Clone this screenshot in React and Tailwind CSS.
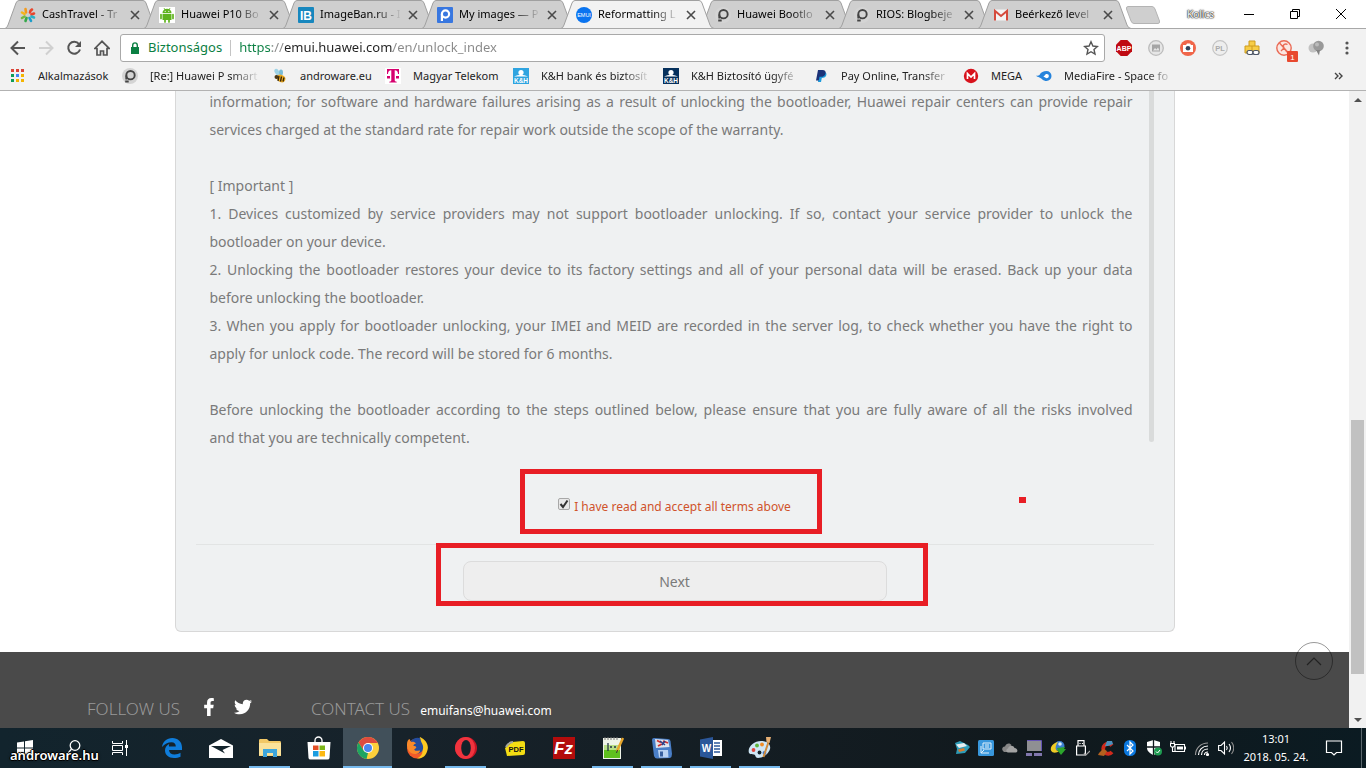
import { useState } from 'react';
import { FaFacebookF, FaTwitter } from 'react-icons/fa';

/* ---------- small favicons ---------- */

const TravelIcon = () => (
  <svg viewBox="0 0 16 16" className="w-4 h-4 shrink-0" fill="none" strokeWidth="2.6" strokeLinecap="round">
    <path d="M6 5.5 5.5 2" stroke="#f39a1d" />
    <path d="M10 5.5C10 4 11 3 12 2.5" stroke="#e8452c" />
    <path d="M4.5 7 2 5.5" stroke="#f5b51b" />
    <path d="M11.5 7.5 14 6.5" stroke="#e8452c" />
    <path d="M4.5 9.5 2 11" stroke="#77b843" />
    <path d="M6.5 11 5.5 14" stroke="#36a84a" />
    <path d="M9.5 11 11 13.8" stroke="#1c9dc9" />
    <path d="M11.5 9.5 14 10.5" stroke="#27b2c8" />
  </svg>
);

const AndroidIcon = () => (
  <svg viewBox="0 0 16 16" className="w-4 h-4 shrink-0">
    <rect width="16" height="16" fill="#fff" />
    <path d="M3.5 6a4.5 4.2 0 0 1 9 0z" fill="#5fb31e" />
    <path d="M3.5 6.8h9V13h-9z" fill="#5fb31e" />
    <path d="M2 7.5v4M14 7.5v4M6 12.500v2.500M10 12.500v2.500" stroke="#5fb31e" strokeWidth="1.700" strokeLinecap="round" />
    <path d="m5 1 1 2M11 1l-1 2" stroke="#5fb31e" strokeWidth="0.8" />
    <circle cx="6.200" cy="4.300" r="0.600" fill="#fff" />
    <circle cx="9.800" cy="4.300" r="0.600" fill="#fff" />
  </svg>
);

const ImageBanIcon = () => (
  <svg viewBox="0 0 16 16" className="w-4 h-4 shrink-0">
    <rect width="16" height="16" rx="1" fill="#1787be" />
    <text x="8" y="12.500" textAnchor="middle" fontSize="12" fontWeight="700" fill="#fff" fontFamily="Liberation Sans, sans-serif">IB</text>
  </svg>
);

const PostImageIcon = () => (
  <svg viewBox="0 0 16 16" className="w-4 h-4 shrink-0">
    <rect width="16" height="16" rx="1" fill="#3877e0" />
    <circle cx="8.500" cy="7" r="3.600" fill="none" stroke="#fff" strokeWidth="2.200" />
    <path d="M4.900 7v7" stroke="#fff" strokeWidth="2.200" />
  </svg>
);

const EmuiIcon = () => (
  <svg viewBox="0 0 16 16" className="w-4 h-4 shrink-0">
    <circle cx="8" cy="8" r="8" fill="#0a74f0" />
    <text x="8" y="10" textAnchor="middle" fontSize="5.500" fill="#fff" fontFamily="Liberation Sans, sans-serif">EMUI</text>
  </svg>
);

const ForumIcon = () => (
  <svg viewBox="0 0 16 16" className="w-4 h-4 shrink-0">
    <circle cx="8" cy="8" r="8" fill="#d4d4d4" />
    <circle cx="8.500" cy="7.200" r="4.200" fill="none" stroke="#444" strokeWidth="1.900" />
    <path d="M4.300 7.500v4M3.200 13.500h3.500" stroke="#444" strokeWidth="1.900" />
  </svg>
);

const GmailIcon = () => (
  <svg viewBox="0 0 16 16" className="w-4 h-4 shrink-0">
    <rect x="1" y="2.500" width="14" height="11" rx="1" fill="#f4f4f4" />
    <path d="M2 13.500V4l6 5 6-5v9.500" fill="none" stroke="#d54b3d" strokeWidth="2" />
  </svg>
);

const AppsIcon = () => (
  <svg viewBox="0 0 16 16" className="w-4 h-4 shrink-0">
    <path d="M1 1h3v3H1zM6 1h3v3H6zM11 1h3v3h-3z" fill="#db4437" />
    <path d="M1 6h3v3H1zM1 11h3v3H1z" fill="#0f9d58" />
    <path d="M6 6h3v3H6z" fill="#4285f4" />
    <path d="M11 6h3v3h-3zM6 11h3v3H6zM11 11h3v3h-3z" fill="#f4b400" />
  </svg>
);

const BeeIcon = () => (
  <svg viewBox="0 0 16 16" className="w-4 h-4 shrink-0">
    <ellipse cx="5" cy="4" rx="2.200" ry="3.500" transform="rotate(-30 5 4)" fill="#9ed3e6" />
    <ellipse cx="9" cy="4.500" rx="2" ry="3" fill="#79bcd8" />
    <ellipse cx="9" cy="10.500" rx="4.500" ry="3.500" transform="rotate(25 9 10.500)" fill="#edaa1e" />
    <path d="m7 8 -1 5M9.500 8.500l-1 5M12 9.500l-1 4" stroke="#33250f" strokeWidth="1.300" />
    <circle cx="4.500" cy="9" r="2" fill="#4a3716" />
  </svg>
);

const TelekomIcon = () => (
  <svg viewBox="0 0 16 16" className="w-4 h-4 shrink-0">
    <rect width="16" height="16" fill="#fff" />
    <path d="M2 1h12v5h-1c0-2.500-1-3.800-3.300-3.800V12c0 1.200.6 1.700 2 1.700v.8H4.300v-.8c1.400 0 2-.5 2-1.700V2.200C4 2.200 3 3.500 3 6H2z" fill="#d6006e" />
    <path d="M2 8h3v2.500H2zM11 8h3v2.500h-3z" fill="#d6006e" />
  </svg>
);

const BankIcon = ({ color }) => (
  <svg viewBox="0 0 16 16" className="w-4 h-4 shrink-0">
    <rect width="16" height="16" fill={color} />
    <circle cx="8" cy="4.500" r="2.600" fill="#fff" />
    <path d="M1 8.500Q8 5 15 8.500z" fill="#fff" />
    <text x="8" y="14.500" textAnchor="middle" fontSize="6.500" fontWeight="700" fill="#fff" fontFamily="Liberation Sans, sans-serif">K&amp;H</text>
  </svg>
);

const PaypalIcon = () => (
  <svg viewBox="0 0 16 16" className="w-4 h-4 shrink-0">
    <path d="M6 4h6c2 1 1.600 3 .8 4.300-.8 1.300-2 1.700-4 1.700L8 14H5z" fill="#1d9bdc" />
    <path d="M5 2h4.500c2.500 0 3.500 1.300 3 3.500C12 8 10.300 8.800 8 8.800H6.500L5.800 12.500H3z" fill="#1c3278" />
  </svg>
);

const MegaIcon = () => (
  <svg viewBox="0 0 16 16" className="w-4 h-4 shrink-0">
    <circle cx="8" cy="8" r="7.200" fill="#d8121c" />
    <path d="M4.500 11V5.500L8 9l3.500-3.500V11" fill="none" stroke="#fff" strokeWidth="1.700" />
  </svg>
);

const MediaFireIcon = () => (
  <svg viewBox="0 0 16 16" className="w-4 h-4 shrink-0">
    <path d="M0 7.500c1.500.6 2.500.3 3.500-.5C5 4 7.500 3 10.500 3A5 5 0 0 1 10.500 13C7 13 6 10.500 3.500 9.500 2 9 .8 8.500 0 7.500z" fill="#2583dc" />
    <path d="M7 8.500c2 0 1.500-2.500 3.800-2.500a2 2 0 0 1 0 4.200C9.500 10.200 9 8.800 7 8.500z" fill="#fff" />
  </svg>
);

/* ---------- extension icons ---------- */

const AbpIcon = () => (
  <svg viewBox="0 0 16 16" className="w-4 h-4">
    <path d="M4.700 0h6.600L16 4.700v6.600L11.300 16H4.700L0 11.300V4.700z" fill="#bf0a12" />
    <text x="8" y="10.800" textAnchor="middle" fontSize="7" fontWeight="700" fill="#fff" fontFamily="Liberation Sans, sans-serif">ABP</text>
  </svg>
);

const PictureIcon = () => (
  <svg viewBox="0 0 16 16" className="w-4 h-4">
    <circle cx="8" cy="8" r="7.300" fill="#e6e6e6" stroke="#bcbcbc" strokeWidth="1.300" />
    <rect x="4" y="4.500" width="8" height="7" fill="#a5a5a5" />
    <path d="m5 10.500 2-2.500 1.500 1.500L10 7.500l1.500 3z" fill="#e6e6e6" />
  </svg>
);

const CameraIcon = () => (
  <svg viewBox="0 0 16 16" className="w-4 h-4">
    <circle cx="8" cy="8" r="8" fill="#f0664a" />
    <path d="M3 5h3l1-1.500h3L11 5h2v7H3z" fill="#fff" />
    <circle cx="8" cy="8.300" r="2.300" fill="#34455e" />
  </svg>
);

const PlIcon = () => (
  <svg viewBox="0 0 16 16" className="w-4 h-4">
    <circle cx="8" cy="8" r="7.300" fill="#eee" stroke="#c4c4c4" strokeWidth="1.200" />
    <text x="8" y="10.800" textAnchor="middle" fontSize="7.500" fontWeight="700" fill="#ababab" fontFamily="Liberation Sans, sans-serif">PL</text>
  </svg>
);

const BlocksIcon = () => (
  <svg viewBox="0 0 16 16" className="w-4 h-4">
    <path d="M5 1h6v5h4v7H1V6h4z" fill="#f7cd45" stroke="#cf9c1d" />
    <path d="M5 6h6M8 6v6" stroke="#cf9c1d" />
    <rect x="3" y="10.500" width="6" height="4" rx="2" fill="#fff" stroke="#4c5566" strokeWidth="1.200" />
    <rect x="9" y="10.500" width="6" height="4" rx="2" fill="#fff" stroke="#4c5566" strokeWidth="1.200" />
  </svg>
);

const BlockedIcon = () => (
  <svg viewBox="0 0 22 22" className="w-[22px] h-[22px] ml-1.5 mt-1.5 shrink-0">
    <circle cx="8" cy="8" r="7.200" fill="#fbe6e1" stroke="#ea6a55" strokeWidth="1.400" />
    <path d="m3.500 3 9 10M5 11l3-3c-2-3 1-5 3.500-3.500M8 8l3 4" fill="none" stroke="#ea6a55" strokeWidth="1.400" />
    <rect x="11" y="11" width="11" height="11" rx="1" fill="#e8492f" />
    <text x="16.500" y="19.500" textAnchor="middle" fontSize="8" fill="#fff" fontFamily="Liberation Sans, sans-serif">1</text>
  </svg>
);

const GlobeIcon = () => (
  <svg viewBox="0 0 16 16" className="w-4 h-4">
    <circle cx="5" cy="8" r="4.500" fill="#c2c2c2" />
    <circle cx="10.500" cy="6" r="5.300" fill="#999" />
    <path d="M8 10h4l-1 5.500z" fill="#828282" />
    <circle cx="9" cy="4.500" r="2" fill="#bbb" />
  </svg>
);

/* ---------- taskbar icons ---------- */

const StartIcon = () => (
  <svg viewBox="0 0 16 16" className="w-4 h-4" fill="#fff">
    <path d="M0 2.500 7 1.500v6H0zM8 1.300 16 0v7.500H8zM0 8.500h7v6L0 13.500zM8 8.500h8V16l-8-1.200z" />
  </svg>
);

const SearchIcon = () => (
  <svg viewBox="0 0 16 16" className="w-4 h-4" fill="none" stroke="#fff" strokeWidth="1.300">
    <circle cx="9" cy="5.500" r="4.800" />
    <path d="M5.500 9 .5 15" />
  </svg>
);

const TaskViewIcon = () => (
  <svg viewBox="0 0 18 18" className="w-[18px] h-[18px] mr-1.5" fill="none" stroke="#fff">
    <path d="M1.500 2v2.500h10V2M1.500 16v-2.500h10V16M1.500 6.500h10v5h-10zM15.500 1v16" />
    <path d="M14 6h3v3h-3z" fill="#fff" stroke="none" />
  </svg>
);

const EdgeIcon = () => (
  <svg viewBox="0 0 20 20" className="w-5 h-5">
    <path d="M0 9C.8 3.500 4.800 0 10.300 0 16 0 20 4 20 9.300V12H7c.2 3 2.500 4.500 5.500 4.500 2.200 0 4.300-.6 6-1.700v4C16.800 19.700 14.500 20 12 20 6.500 20 3 17 3 12.300 3 9.500 4.700 7 7.500 5.800 6.500 6.900 7 8.300 7 8.500h6.800C13.800 6 12.500 4.300 9.500 4.300 6 4.300 2.500 6 0 9z" fill="#0f7ddb" />
  </svg>
);

const MailIcon = () => (
  <svg viewBox="0 0 24 20" className="w-6 h-5">
    <path d="M0 7.500 12 1l12 6.500V20H0z" fill="#fff" />
    <path d="M2 8h20L13.500 12l2.500 3.500z" fill="#14242c" />
  </svg>
);

const FolderIcon = () => (
  <svg viewBox="0 0 22 20" className="w-[22px] h-5">
    <path d="M0 2.500C0 1.500.5 1 1.500 1H8l2 2h10.500c1 0 1.500.5 1.500 1.500V18H0z" fill="#f2c866" />
    <path d="M0 5h22v12.500H0z" fill="#fbe29a" />
    <path d="M4 19v-8h14v8h-4v-4H8v4z" fill="#3ea6dc" />
  </svg>
);

const StoreIcon = () => (
  <svg viewBox="0 0 24 24" className="w-6 h-6">
    <path d="M8 7V4.500a3.500 3.500 0 0 1 7 0V7" fill="none" stroke="#fff" strokeWidth="1.300" />
    <path d="M.5 6h23L22.500 22q-.2 1.500-2 1.500h-17q-1.800 0-2-1.500z" fill="#fff" />
    <path d="M6 9.500h5.500V14H6z" fill="#e34f26" />
    <path d="M12.500 9.500H18V14h-5.500z" fill="#7cb518" />
    <path d="M6 15h5.500v5.500H6z" fill="#1c9de0" />
    <path d="M12.500 15H18v5.500h-5.500z" fill="#fcb813" />
  </svg>
);

const ChromeIcon = () => (
  <svg viewBox="0 0 22 22" className="w-[22px] h-[22px]">
    <circle cx="11" cy="11" r="11" fill="#fdd03b" />
    <path d="M1.500 5.500A11 11 0 0 1 20.500 5.500L20.600 6H11l-4.500 7.500z" fill="#dd4b3e" />
    <path d="M1.500 5.500 6.600 13.500 11 16l-1.500 6A11 11 0 0 1 1.500 5.500z" fill="#1da462" />
    <circle cx="11" cy="11" r="5" fill="#fff" />
    <circle cx="11" cy="11" r="4" fill="#4a86ee" />
  </svg>
);

const FirefoxIcon = () => (
  <svg viewBox="0 0 22 22" className="w-[22px] h-[22px]">
    <circle cx="11" cy="11.500" r="10" fill="#f15a29" />
    <path d="M14 0c6 3 9 8 7.500 13C20 19 16.500 21.800 11 21.500c6-3 7-8 3.500-12C13 6.500 13 3 14 0z" fill="#fdc921" />
    <path d="M5 4c3-3.500 7-4 9.500-2.500 0 4 3.500 6 2.500 10.500-1 5-8 6-11 2-2-3-2.500-7-1-10z" fill="#234c9e" />
    <path d="M1 7c0-3 1.500-4.500 2.500-5L5 5c2-.5 4 0 5 1.500-2 .5-2.500 1.500-2.500 2.500 3 0 3.500 1.500 2 2.500-1.500.5-1.500 1-.5 2 2 1 3.500-.5 5 0 0 2-2.500 3.500-5 3.500C4 17 .5 12 1 7z" fill="#f9892a" />
  </svg>
);

const OperaIcon = () => (
  <svg viewBox="0 0 22 22" className="w-[22px] h-[22px]">
    <circle cx="11" cy="11" r="11" fill="#c51424" />
    <path d="M11 0A11 11 0 0 0 11 22 9 11 0 0 0 11 0z" fill="#f0343e" />
    <ellipse cx="11" cy="11" rx="4.800" ry="8" fill="#14222a" />
  </svg>
);

const PdfIcon = () => (
  <svg viewBox="0 0 20 18" className="w-5 h-[18px]">
    <path d="M0 9 7 3 18 2q2 0 2 2v10q0 2-2 2L2 17z" fill="#f4dd13" />
    <path d="M1 8Q3 3.500 8 3" fill="none" stroke="#a4a59e" strokeWidth="2" />
    <text x="11" y="13" textAnchor="middle" fontSize="7.500" fontWeight="700" fill="#111" fontFamily="Liberation Sans, sans-serif">PDF</text>
  </svg>
);

const FileZillaIcon = () => (
  <svg viewBox="0 0 22 22" className="w-[22px] h-[22px]">
    <rect width="22" height="22" fill="#b30c0c" />
    <text x="10.500" y="17" textAnchor="middle" fontSize="17" fontWeight="700" fontStyle="italic" fill="#fff" fontFamily="Liberation Sans, sans-serif">Fz</text>
  </svg>
);

const NotepadIcon = () => (
  <svg viewBox="0 0 22 24" className="w-[22px] h-6">
    <path d="M1 2h18v21H1z" fill="#eef3e8" />
    <path d="M2 13h16v9H2z" fill="#5fc01e" />
    <path d="M2 9h16v5H2z" fill="#b7df86" />
    <path d="M3 1v3M6 1v3M9 1v3M12 1v3M15 1v3" stroke="#777" />
    <path d="M6 7v8M8 11h2M12 11h2" stroke="#234" strokeWidth="1.300" />
    <path d="m21 2-6 13" stroke="#e6a52c" strokeWidth="2.500" />
    <path d="m15.500 14-1 3" stroke="#333" />
  </svg>
);

const DiskIcon = () => (
  <svg viewBox="0 0 22 22" className="w-[22px] h-[22px]">
    <path d="M1 3Q1 1 3 1l14 1q2 0 2.500 2L21 17q0 3-2 4l-13 .5Q4 21.500 3 19z" fill="#4a7fc8" />
    <path d="m4 2 13 1 1.500 7L5 11z" fill="#dfe5ee" />
    <path d="m6 3.500 4 2M12 4l5 2M7 9l4-2" stroke="#cf3131" strokeWidth="1.800" />
    <path d="m9 4 5 4M14 4l-3 4" stroke="#283e88" strokeWidth="1.400" />
    <path d="M7 13h10l.5 7.500H8z" fill="#b9d2f2" />
    <path d="M9 14.500h3v5H9z" fill="#375f9e" />
  </svg>
);

const WordIcon = () => (
  <svg viewBox="0 0 22 22" className="w-[22px] h-[22px]">
    <path d="M12 3h10v16H12z" fill="#fff" />
    <path d="M14 6h6M14 9h6M14 12h6M14 15h6" stroke="#2b579a" strokeWidth="1.300" />
    <path d="M0 2.500 13 0v22L0 19.500z" fill="#2b579a" />
    <text x="6.500" y="15" textAnchor="middle" fontSize="10" fontWeight="700" fill="#fff" fontFamily="Liberation Sans, sans-serif">W</text>
  </svg>
);

const PaintIcon = () => (
  <svg viewBox="0 0 24 24" className="w-6 h-6">
    <path d="M1 17C-1 11 6 5 13 5s10 4 9 8-6 9-12 9c-3 0-2-3-4-3.500S1.800 18.500 1 17z" fill="#cfe6f5" />
    <circle cx="5.500" cy="14" r="1.900" fill="#e0463c" />
    <circle cx="9" cy="9.500" r="1.900" fill="#5db53c" />
    <circle cx="14" cy="8.500" r="1.900" fill="#f08b25" />
    <circle cx="16.500" cy="17" r="1.900" fill="#3a78cf" />
    <circle cx="11.500" cy="16.500" r="1.900" fill="#14222a" />
    <path d="m20.500 6-5 15" stroke="#d18b3c" strokeWidth="2" />
    <path d="m18 1 5 0-1.500 6-3-1z" fill="#e7b074" />
  </svg>
);

/* ---------- tray icons ---------- */

const ShieldFishIcon = () => (
  <svg viewBox="0 0 16 16" className="w-4 h-4">
    <path d="M1 3 6 1l8 4 2 2-5 6-9 1 1-5z" fill="#2d9cb8" />
    <path d="m2 4.500 8-1.500 3 3-8 2z" fill="#e6eef0" />
    <path d="m4 9.500 6-1.500 1 2.500-6 1.500z" fill="#d4792e" />
  </svg>
);

const MonitorBlueIcon = () => (
  <svg viewBox="0 0 16 16" className="w-4 h-4">
    <rect width="16" height="16" rx="1.500" fill="#3897dc" />
    <path d="M5 3h8v6H5zM3 6v7h8M7 5h4M7 7h4M3 13l3-3" fill="none" stroke="#e1f1fc" />
  </svg>
);

const CloudIcon = () => (
  <svg viewBox="0 0 16 16" className="w-4 h-4">
    <path d="M1 11c-2-2 0-5 2-4.500C4 3 8 2.500 9.500 5L5 12H2z" fill="#868686" />
    <path d="M6 12.500c-2.500-.5-2-3.500 0-4C7 5 11.500 5 12.500 8c3 0 4 4 1.500 4.500z" fill="#a3a3a3" />
  </svg>
);

const ComputerIcon = () => (
  <svg viewBox="0 0 16 16" className="w-4 h-4">
    <path d="M1 0h14v11H1z" fill="#8f8f93" />
    <path d="M1 .5h14.500V11" fill="none" stroke="#6554b5" />
    <path d="M0 13h6v3H0zM8 13h8v3H8z" fill="#8177ad" />
  </svg>
);

const IdmIcon = () => (
  <svg viewBox="0 0 16 16" className="w-4 h-4">
    <circle cx="9.500" cy="6" r="5" fill="#3b7fd0" />
    <path d="M8 2C3 3 0 7 1 10.500c1.500 3 6 2.500 8 .5-4 0-4.500-4.500-1-9z" fill="#eecb25" />
    <path d="m7 8 8-1-1 2h2l-5 6-3-4z" fill="#2ca52c" />
    <circle cx="10" cy="4" r="1.800" fill="#d9edfb" />
  </svg>
);

const UsbIcon = () => (
  <svg viewBox="0 0 16 16" className="w-4 h-4" fill="none" stroke="#fff" strokeWidth="1.200">
    <path d="M4 .6h6V6H4zM2.600 6h8.800v9H2.600z" />
    <path d="M6 3v1M8.500 3v1" />
    <path d="m10 13 2 2 4-4" stroke="#a6a6a6" />
  </svg>
);

const CleanerIcon = () => (
  <svg viewBox="0 0 16 16" className="w-4 h-4">
    <path d="M14 5.500A5 5 0 1 0 14 12" fill="none" stroke="#cf2a1c" strokeWidth="3.800" />
    <path d="m9 1 5 0 1 3-5 2-3 0z" fill="#4b90bd" />
    <path d="m5 9 4 2-3 5-6-1 1-2z" fill="#b3621f" />
  </svg>
);

const BluetoothIcon = () => (
  <svg viewBox="0 0 16 16" className="w-4 h-4">
    <rect x="2" width="12" height="16" rx="5.500" fill="#0a78e0" />
    <path d="m5 5 6 6-3 3V2l3 3-6 6" fill="none" stroke="#fff" strokeWidth="1.200" />
  </svg>
);

const DefenderIcon = () => (
  <svg viewBox="0 0 16 16" className="w-4 h-4">
    <path d="M7.500 0 14 2v6c0 3-3 5.500-6.500 7C4 13.500 1 11 1 8V2z" fill="#fff" />
    <path d="M7.500 0v15M1 7h13" stroke="#111a1e" strokeWidth="1.300" />
    <circle cx="12" cy="11.500" r="4" fill="#1e9b51" />
    <path d="m10 11.500 1.500 1.500 2.500-3" fill="none" stroke="#fff" />
  </svg>
);

const BatteryIcon = () => (
  <svg viewBox="0 0 16 16" className="w-4 h-4" fill="none" stroke="#fff" strokeWidth="1.100">
    <path d="M5 4.500h9.500v7H5zM15.500 6.500v3" />
    <path d="M7 6.500h6v3H7z" fill="#fff" stroke="none" />
    <path d="M1 1v2M4 1v2M.5 3.500h4V6l-1 1h-2l-1-1zM2.500 7v4.500H5" />
  </svg>
);

const WifiIcon = () => (
  <svg viewBox="0 0 16 16" className="w-4 h-4" fill="none" stroke="#fff" strokeWidth="1.200">
    <path d="M1.500 15C1.500 8 7 3 14 3" stroke="#9a9a9a" />
    <path d="M4.500 15C4.500 10 8.500 6 14 6M7.500 15c0-3.500 2.500-6 6.500-6M10.500 15c0-2 1.500-3 3.500-3" />
    <circle cx="13.500" cy="14.500" r="1" fill="#fff" />
  </svg>
);

const SpeakerIcon = () => (
  <svg viewBox="0 0 16 16" className="w-4 h-4" fill="none" stroke="#fff" strokeWidth="1.100">
    <path d="M.6 5.500H3L6.500 2v12L3 10.500H.6z" />
    <path d="M8.500 6q1.500 2 0 4M11 4q3 4 0 8" />
    <path d="M13.500 2q4.500 6 0 12" stroke="#8c8c8c" />
  </svg>
);

/* ---------- data ---------- */

const TABS = [
  { title: 'CashTravel - Tr', Icon: TravelIcon },
  { title: 'Huawei P10 Bo', Icon: AndroidIcon },
  { title: 'ImageBan.ru - I', Icon: ImageBanIcon },
  { title: 'My images — P', Icon: PostImageIcon },
  { title: 'Reformatting L', Icon: EmuiIcon, active: true },
  { title: 'Huawei Bootlo', Icon: ForumIcon },
  { title: 'RIOS: Blogbeje', Icon: ForumIcon },
  { title: 'Beérkező level', Icon: GmailIcon },
];

const BankLight = () => <BankIcon color="#2fa4e0" />;
const BankDark = () => <BankIcon color="#06305c" />;

const BOOKMARKS = [
  { title: 'Alkalmazások', Icon: AppsIcon, width: 'w-[112px]' },
  { title: '[Re:] Huawei P smart', Icon: ForumIcon, width: 'w-[150px]', fade: true },
  { title: 'androware.eu', Icon: BeeIcon, width: 'w-[113px]' },
  { title: 'Magyar Telekom', Icon: TelekomIcon, width: 'w-[128px]' },
  { title: 'K&H bank és biztosít', Icon: BankLight, width: 'w-[150px]', fade: true },
  { title: 'K&H Biztosító ügyfé', Icon: BankDark, width: 'w-[150px]', fade: true },
  { title: 'Pay Online, Transfer', Icon: PaypalIcon, width: 'w-[150px]', fade: true },
  { title: 'MEGA', Icon: MegaIcon, width: 'w-[73px]' },
  { title: 'MediaFire - Space fo', Icon: MediaFireIcon, width: 'w-[150px]', fade: true },
];

const EXTENSIONS = [
  { name: 'Adblock Plus', Icon: AbpIcon },
  { name: 'Image viewer', Icon: PictureIcon },
  { name: 'Screenshot', Icon: CameraIcon },
  { name: 'PL', Icon: PlIcon },
  { name: 'Blocks', Icon: BlocksIcon },
  { name: 'Blocker', Icon: BlockedIcon },
  { name: 'Globe', Icon: GlobeIcon },
];

const TASKS = [
  { name: 'Start', Icon: StartIcon },
  { name: 'Search', Icon: SearchIcon },
  { name: 'Task View', Icon: TaskViewIcon },
  { name: 'Edge', Icon: EdgeIcon },
  { name: 'Mail', Icon: MailIcon },
  { name: 'Explorer', Icon: FolderIcon, open: true },
  { name: 'Store', Icon: StoreIcon },
  { name: 'Chrome', Icon: ChromeIcon, open: true, active: true },
  { name: 'Firefox', Icon: FirefoxIcon },
  { name: 'Opera', Icon: OperaIcon, open: true },
  { name: 'PDF', Icon: PdfIcon },
  { name: 'FileZilla', Icon: FileZillaIcon },
  { name: 'Notepad++', Icon: NotepadIcon, open: true },
  { name: 'Commander', Icon: DiskIcon, open: true },
  { name: 'Word', Icon: WordIcon, open: true },
  { name: 'Paint', Icon: PaintIcon, open: true },
];

const TRAY = [
  ShieldFishIcon, MonitorBlueIcon, CloudIcon, ComputerIcon, IdmIcon, UsbIcon,
  CleanerIcon, BluetoothIcon, DefenderIcon, BatteryIcon, WifiIcon, SpeakerIcon,
];

const FADE = '[mask-image:linear-gradient(to_right,#000_calc(100%-28px),transparent)]';

/* ---------- browser ---------- */

function Tab({ title, Icon, active }) {
  return (
    <div className={`relative w-[153px] h-[29px] -mr-3.5 shrink-0 flex items-center pl-[15px] ${active ? 'z-10' : ''}`}>
      <svg viewBox="0 0 153 29" preserveAspectRatio="none" className="absolute inset-0 w-full h-full">
        <path d="M0 28.500 Q2 28 3 25L11 3Q12 .5 14 .5H138Q140 .5 141 3L149 25Q150 28 153 28.500" fill={active ? '#f2f2f2' : '#cfcfcf'} stroke="#a0a0a0" />
        {active && <path d="M1 28.500H152" stroke="#f2f2f2" />}
      </svg>
      <button className="relative flex items-center gap-1.5 text-left">
        <Icon />
        <span className={`w-[82px] overflow-hidden whitespace-nowrap ${FADE}`}>{title}</span>
      </button>
      <button aria-label="Close tab" className="relative ml-1.5">
        <svg viewBox="0 0 10 10" className="w-2.5 h-2.5" stroke="#4a4a4a" strokeWidth="1.600"><path d="m1 1 8 8M9 1 1 9" /></svg>
      </button>
    </div>
  );
}

function TitleBar() {
  return (
    <div className="flex items-start h-[29px] bg-white border-b border-[#a8a8a8] shrink-0 overflow-hidden">
      <div className="flex pl-[5px] text-[11px]">
        {TABS.map((t) => <Tab key={t.title} {...t} />)}
      </div>
      <button aria-label="New tab" className="ml-2 mt-1.5">
        <svg viewBox="0 0 36 18" className="w-9 h-[18px]"><path d="M3 .5H27Q29 .5 30 3L34.500 15Q35 17.500 33 17.500H9Q7 17.500 6 15L1.500 3Q1 .5 3 .5z" fill="#cfcfcf" stroke="#b4b4b4" /></svg>
      </button>
      <div className="ml-auto mr-0.5 flex items-center h-[28px]">
        <span className="mr-3 text-[10px] text-white [text-shadow:0_0_1px_#222,0_0_1px_#222,0_0_2px_#222]">Kolics</span>
        <button aria-label="Minimize" className="w-[46px] flex justify-center"><svg viewBox="0 0 10 10" className="w-2.5 h-2.5" stroke="#000"><path d="M0 5.500h10" /></svg></button>
        <button aria-label="Restore" className="w-[46px] flex justify-center"><svg viewBox="0 0 10 10" className="w-2.5 h-2.5" fill="none" stroke="#000"><path d="M.5 2.500h7v7h-7zM2.500 2V.500h7v7H8" /></svg></button>
        <button aria-label="Close" className="w-[46px] flex justify-center"><svg viewBox="0 0 10 10" className="w-2.5 h-2.5" stroke="#000"><path d="m0 0 10 10M10 0 0 10" /></svg></button>
      </div>
    </div>
  );
}

function Toolbar() {
  const [url, setUrl] = useState('https://emui.huawei.com/en/unlock_index');

  return (
    <div className="flex items-center h-[35px] pt-0.5 bg-[#f2f2f2] shrink-0">
      <div className="flex items-center gap-3 pl-2.5 pr-2.5 text-[#555]">
        <button aria-label="Back"><svg viewBox="0 0 16 16" className="w-4 h-4" fill="none" stroke="currentColor" strokeWidth="2"><path d="M15 8H2M8 1.500 1.500 8 8 14.500" /></svg></button>
        <button aria-label="Forward" className="text-[#d0d0d0]"><svg viewBox="0 0 16 16" className="w-4 h-4" fill="none" stroke="currentColor" strokeWidth="2"><path d="M1 8h13M8 1.500 14.500 8 8 14.500" /></svg></button>
        <button aria-label="Reload"><svg viewBox="0 0 16 16" className="w-4 h-4" fill="none" stroke="currentColor" strokeWidth="2"><path d="M13 4A6 6 0 1 0 14 9.500" /><path d="M15 1v6H9z" fill="currentColor" stroke="none" /></svg></button>
        <button aria-label="Home"><svg viewBox="0 0 16 16" className="w-4 h-4" fill="none" stroke="currentColor" strokeWidth="1.700"><path d="M.8 8.500 8 1.300l7.200 7.200H13V15H9.500v-4h-3v4H3V8.500z" /></svg></button>
      </div>
      <div className="flex-1 flex items-center h-7 bg-white border border-[#a9a9a9] rounded-[3px] px-[9px] text-[13px]">
        <svg viewBox="0 0 10 12" className="w-2.5 h-3 mr-2"><path d="M1 5h8v7H1z" fill="#0b8043" /><path d="M2.700 5V3.200a2.300 2.300 0 0 1 4.600 0V5" fill="none" stroke="#0b8043" strokeWidth="1.400" /></svg>
        <span className="text-[#0b8043]">Biztonságos</span>
        <span className="w-px h-4 bg-[#c4c4c4] mx-2" />
        <input
          aria-label="Address"
          value={url}
          onChange={(e) => setUrl(e.target.value)}
          className="flex-1 min-w-0 outline-none text-transparent caret-black bg-clip-text bg-[linear-gradient(to_right,#0b8043_33px,#888_33px,#888_46px,#222_46px,#222_154px,#888_154px)]"
        />
        <button aria-label="Bookmark">
          <svg viewBox="0 0 16 16" className="w-4 h-4 -mr-1" fill="none" stroke="#555" strokeWidth="1.400"><path d="m8 1.800 1.900 4.200 4.500.5-3.400 3 1 4.500L8 11.700 4 14l1-4.500-3.400-3L6.100 6z" /></svg>
        </button>
      </div>
      <div className="flex items-center pl-[3px] pr-1">
        {EXTENSIONS.map(({ name, Icon }) => (
          <button key={name} aria-label={name} className="w-8 h-[22px] flex items-center justify-center"><Icon /></button>
        ))}
        <button aria-label="Menu" className="w-[30px] flex justify-center">
          <svg viewBox="0 0 4 14" className="w-1 h-3.5" fill="#555"><circle cx="2" cy="2" r="1.600" /><circle cx="2" cy="7" r="1.600" /><circle cx="2" cy="12" r="1.600" /></svg>
        </button>
      </div>
    </div>
  );
}

function BookmarksBar() {
  return (
    <div className="flex items-center h-[27px] pb-0.5 bg-[#f2f2f2] border-b border-[#b2b2b2] pl-2.5 text-[11px] text-[#222] shrink-0">
      {BOOKMARKS.map(({ title, Icon, width, fade }) => (
        <a key={title} href="#" className={`flex items-center gap-3 shrink-0 pr-3 ${width}`}>
          <Icon />
          <span className={`flex-1 overflow-hidden whitespace-nowrap ${fade ? FADE : ''}`}>{title}</span>
        </a>
      ))}
      <button aria-label="More bookmarks" className="ml-auto mr-[23px]">
        <svg viewBox="0 0 9 8" className="w-[9px] h-2" fill="none" stroke="#444" strokeWidth="1.400"><path d="m1 1 3 3-3 3M5 1l3 3-3 3" /></svg>
      </button>
    </div>
  );
}

/* ---------- page ---------- */

function Terms() {
  return (
    <div className="flex">
      <div className="flex-1 pl-3.5 pr-4 text-[14px] leading-7 text-justify text-[#7a7a7a]">
        <p>information; for software and hardware failures arising as a result of unlocking the bootloader, Huawei repair centers can provide repair services charged at the standard rate for repair work outside the scope of the warranty.</p>
        <p className="mt-7">[ Important ]</p>
        <p>1. Devices customized by service providers may not support bootloader unlocking. If so, contact your service provider to unlock the bootloader on your device.</p>
        <p>2. Unlocking the bootloader restores your device to its factory settings and all of your personal data will be erased. Back up your data before&nbsp;unlocking the bootloader.</p>
        <p>3. When you apply for bootloader unlocking, your IMEI and MEID are recorded in the server log, to check whether you have the right to apply for unlock code. The record will be stored for 6 months.</p>
        <p className="mt-7">Before unlocking the bootloader according to the steps outlined below, please ensure that you are fully aware of all the risks involved and&nbsp;that you are technically competent.</p>
      </div>
      <div className="w-[5px] mb-2.5 rounded-b bg-[#d9dbdb]" />
    </div>
  );
}

function UnlockCard() {
  const [accepted, setAccepted] = useState(true);

  return (
    <div className="w-full max-w-[1000px] mx-auto mb-5 px-5 bg-[#eff1f2] border border-t-0 border-[#d8d8d8] rounded-b-md">
      <Terms />

      <div className="relative flex justify-center pt-11 pb-[26px] border-b border-[#e2e4e4]">
        <div className="relative flex items-center gap-1">
          <input
            id="accept"
            type="checkbox"
            checked={accepted}
            onChange={(e) => setAccepted(e.target.checked)}
            className="peer appearance-none w-3 h-3 -mt-1.5 border border-[#a8a8a8] rounded-[2px] bg-[#e8e8e8]"
          />
          <svg viewBox="0 0 12 12" className="absolute left-0 top-0.5 w-3 h-3 pointer-events-none hidden peer-checked:block" fill="none" stroke="#333" strokeWidth="2"><path d="m2.500 6 2.500 3 4.500-6.500" /></svg>
          <label htmlFor="accept" className="text-[12px] leading-[22px] text-[#d0532b]">I have read and accept all terms above</label>
          <div className="absolute -left-[38px] -right-[31px] -top-[27px] -bottom-4 border-[5px] border-[#e81e25] pointer-events-none" />
        </div>
        <div className="absolute right-32 bottom-[41px] w-[7px] h-1.5 bg-[#e81e25]" />
      </div>

      <div className="flex justify-center pt-4 pb-[30px]">
        <div className="relative w-[424px]">
          <button className="w-full h-10 border border-[#dcdcdc] rounded-lg bg-[#eee] text-[14px] text-[#7a7a7a]">Next</button>
          <div className="absolute -left-[27px] -right-[41px] -top-[18px] -bottom-[5px] border-[5px] border-[#e81e25] pointer-events-none" />
        </div>
      </div>
    </div>
  );
}

function Footer() {
  return (
    <footer className="flex items-center h-[76px] pt-[38px] pl-[87px] bg-[#4a4a4a] shrink-0">
      <span className="text-[17px] text-[#999] font-light">FOLLOW US</span>
      <a href="#" aria-label="Facebook" className="ml-5 mb-1 text-white"><FaFacebookF className="w-[18px] h-[18px]" /></a>
      <a href="#" aria-label="Twitter" className="ml-4 mb-1 text-white"><FaTwitter className="w-[18px] h-[18px]" /></a>
      <span className="ml-[59px] text-[17px] text-[#999] font-light">CONTACT US</span>
      <a href="mailto:emuifans@huawei.com" className="ml-2.5 mt-1 text-[12px] text-white">emuifans@huawei.com</a>
    </footer>
  );
}

function PageScrollbar() {
  return (
    <div className="w-[17px] shrink-0 flex flex-col items-center bg-[#f1f1f1]">
      <button aria-label="Scroll up" className="h-[17px]"><svg viewBox="0 0 8 4" className="w-2 h-1" fill="#505050"><path d="M0 4 4 0l4 4z" /></svg></button>
      <div className="grow-[312]" />
      <div className="grow-[254] w-[13px] bg-[#c1c1c1]" />
      <div className="grow-[37]" />
      <button aria-label="Scroll down" className="h-[17px]"><svg viewBox="0 0 8 4" className="w-2 h-1" fill="#505050"><path d="m0 0 4 4 4-4z" /></svg></button>
    </div>
  );
}

/* ---------- taskbar ---------- */

function Taskbar() {
  return (
    <div className="relative flex h-10 shrink-0 bg-[linear-gradient(to_right,#12242d,#17222a_30%,#11191d_75%,#0b1b22)] text-white">
      {TASKS.map(({ name, Icon, open, active }) => (
        <button key={name} aria-label={name} className={`relative w-[49px] flex items-center justify-center ${active ? 'bg-[#41505a]' : ''}`}>
          <Icon />
          {open && <span className={`absolute bottom-0 h-0.5 bg-[#76b9ed] ${active ? 'inset-x-0' : 'inset-x-1'}`} />}
        </button>
      ))}
      <div className="ml-auto flex items-center gap-2">
        {TRAY.map((Icon, i) => <Icon key={i} />)}
      </div>
      <div className="w-[84px] flex flex-col justify-center text-center text-[11px] leading-[18px]">
        <span>13:01</span>
        <span>2018. 05. 24.</span>
      </div>
      <button aria-label="Notifications" className="w-8 flex items-center justify-center">
        <svg viewBox="0 0 18 18" className="w-[18px] h-[18px]" fill="none" stroke="#fff" strokeWidth="1.200"><path d="M1.500 2h15v11.500h-5L9 16l-2.500-2.500h-5z" /></svg>
      </button>
      <div className="w-3 mr-1 border-r border-[#5a666c]" />
      <span className="absolute left-2.5 bottom-1 text-[13px] leading-[18px] font-semibold [text-shadow:1px_0_0_#000,-1px_0_0_#000,0_1px_0_#000,0_-1px_0_#000,0_0_3px_#000]">androware.hu</span>
    </div>
  );
}

export default function App() {
  return (
    <div className="flex flex-col h-screen overflow-hidden bg-white font-['Noto_Sans','Open_Sans',sans-serif]">
      <TitleBar />
      <Toolbar />
      <BookmarksBar />
      <div className="flex-1 min-h-0 flex">
        <main className="relative flex-1 min-w-0 flex flex-col justify-end overflow-hidden">
          <UnlockCard />
          <Footer />
          <button aria-label="Back to top" className="absolute right-4 bottom-12 w-[38px] h-[38px] rounded-full border border-black/40 flex items-center justify-center">
            <svg viewBox="0 0 16 9" className="w-4 h-[9px]" fill="none" stroke="#222" strokeWidth="1.200"><path d="m1 8 7-7 7 7" /></svg>
          </button>
        </main>
        <PageScrollbar />
      </div>
      <Taskbar />
    </div>
  );
}
